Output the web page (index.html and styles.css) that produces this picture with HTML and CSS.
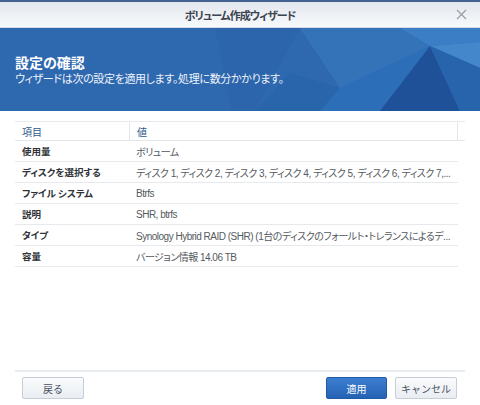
FILE: index.html
```html
<!DOCTYPE html>
<html lang="ja">
<head>
  <meta charset="UTF-8" />
  <title>ボリューム作成ウィザード</title>
  <link rel="stylesheet" href="styles.css">
</head>
<body>
  <div class="wizard">
    <div class="titlebar">
      <span class="title">ボリューム作成ウィザード</span>
      <span class="close">
        <svg width="11" height="11" viewBox="0 0 11 11"><path d="M1 1L10 10M10 1L1 10" stroke="#9aa0a8" stroke-width="1.3" fill="none"/></svg>
      </span>
    </div>

    <div class="banner">
      <svg class="facets" width="480" height="83" viewBox="0 0 480 83">
        <polygon points="215,0 300,0 255,83 232,83" fill="#2a62a6" opacity="0.5"/>
        <polygon points="300,0 400,0 430,18 340,60" fill="#3a7ac0" opacity="0.6"/>
        <polygon points="400,0 480,0 480,14 430,18" fill="#3b7ec6"/>
        <polygon points="430,18 480,14 480,40" fill="#4a8fd2" opacity="0.8"/>
        <polygon points="340,60 430,18 380,83 320,83" fill="#2c6fb8"/>
        <polygon points="430,18 380,83 460,83" fill="#1f5198"/>
        <polygon points="430,18 480,40 480,83 460,83" fill="#2764ab"/>
        <polygon points="255,83 320,83 340,60 290,45" fill="#2762a8" opacity="0.6"/>
      </svg>
      <div class="banner-text">
        <h1>設定の確認</h1>
        <p>ウィザードは次の設定を適用します。処理に数分かかります。</p>
      </div>
    </div>

    <div class="content">
      <div class="grid head">
        <div class="cell">項目</div>
        <div class="cell">値</div>
        <div class="cell"></div>
      </div>
      <div class="grid row">
        <div class="cell label">使用量</div>
        <div class="cell value">ボリューム</div>
      </div>
      <div class="grid row">
        <div class="cell label">ディスクを選択する</div>
        <div class="cell value">ディスク 1, ディスク 2, ディスク 3, ディスク 4, ディスク 5, ディスク 6, ディスク 7,...</div>
      </div>
      <div class="grid row">
        <div class="cell label">ファイル システム</div>
        <div class="cell value">Btrfs</div>
      </div>
      <div class="grid row">
        <div class="cell label">説明</div>
        <div class="cell value">SHR, btrfs</div>
      </div>
      <div class="grid row">
        <div class="cell label">タイプ</div>
        <div class="cell value">Synology Hybrid RAID (SHR) (1台のディスクのフォールト・トレランスによるデ...</div>
      </div>
      <div class="grid row">
        <div class="cell label">容量</div>
        <div class="cell value">バージョン情報 14.06 TB</div>
      </div>
    </div>

    <div class="footer">
      <button class="btn">戻る</button>
      <div class="spacer"></div>
      <button class="btn primary">適用</button>
      <button class="btn">キャンセル</button>
    </div>
  </div>
</body>
</html>
```

FILE: styles.css
```css
body {
  margin: 0;
  background: #ffffff;
  font-family: "Liberation Sans", "Noto Sans CJK JP", sans-serif;
  font-feature-settings: "palt";
}
.wizard {
  width: 480px;
  height: 405px;
  display: flex;
  flex-direction: column;
  border-top: 2px solid #44638f;
  box-sizing: border-box;
}
.titlebar {
  height: 25px;
  flex: none;
  display: flex;
  align-items: center;
  justify-content: center;
  position: relative;
  background: linear-gradient(#e2e7ee, #f8fafc);
  border-bottom: 1px solid #d3dce6;
}
.title {
  font-family: "Noto Sans CJK JP", sans-serif;
  font-size: 11px;
  font-weight: bold;
  color: #3c4450;
  letter-spacing: -1px;
}
.close {
  position: absolute;
  right: 13px;
  top: 7px;
  line-height: 0;
}
.banner {
  height: 83px;
  flex: none;
  position: relative;
  overflow: hidden;
  background: #2e69b0;
}
.facets {
  position: absolute;
  left: 0;
  top: 0;
}
.banner-text {
  position: relative;
  padding: 25px 0 0 15px;
  color: #ffffff;
}
.banner-text h1 {
  margin: 0;
  font-family: "Noto Sans CJK JP", sans-serif;
  font-size: 14px;
  line-height: 18px;
  font-weight: bold;
}
.banner-text p {
  margin: 0;
  font-family: "Noto Sans CJK JP", sans-serif;
  font-size: 11px;
  line-height: 15px;
  letter-spacing: -0.35px;
  color: #eef3fa;
}
.content {
  flex: 1;
  padding: 10px 15px 0 15px;
}
.grid {
  display: grid;
  grid-template-columns: 115px 328px;
  width: 443px;
}
.head {
  grid-template-columns: 115px 328px 7px;
  width: 450px;
  height: 20px;
  border-top: 1px solid #e6eaee;
  border-bottom: 1px solid #e1e6eb;
  box-sizing: border-box;
}
.head .cell {
  color: #2d5a8c;
  border-right: 1px solid #e3e7ec;
}
.head .cell:last-child {
  border-right: none;
}
.row {
  height: 21px;
  border-bottom: 1px solid #e6e9ed;
  box-sizing: border-box;
}
.cell {
  display: flex;
  align-items: center;
  padding: 0 7px;
  font-size: 10px;
  white-space: nowrap;
  overflow: hidden;
  min-width: 0;
}
.cell.label {
  color: #2f3338;
  font-family: "Noto Sans CJK JP", sans-serif;
  font-size: 9.5px;
  font-weight: bold;
}
.cell.value {
  color: #555a60;
  padding-left: 6px;
  letter-spacing: -0.5px;
}
.footer {
  flex: none;
  display: flex;
  gap: 8px;
  margin: 0 15px;
  padding: 5px 8px 6px 7px;
  border-top: 2px solid #e8ecf0;
}
.spacer {
  flex: 1;
}
.btn {
  height: 22px;
  width: 62px;
  padding: 0;
  border: 1px solid #c6ced8;
  border-radius: 2px;
  background: linear-gradient(#fafbfc, #e9edf2);
  color: #4a5260;
  font-family: "Noto Sans CJK JP", sans-serif;
  font-size: 10px;
}
.btn.primary {
  width: 61px;
  border-color: #1f5aa6;
  background: linear-gradient(#3c7fd0, #2662b4);
  color: #ffffff;
}
```
